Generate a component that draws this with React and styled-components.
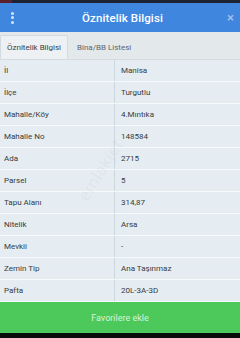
import React from "react";
import styled, { createGlobalStyle } from "styled-components";

const rows = [
  ["İl", "Manisa"],
  ["İlçe", "Turgutlu"],
  ["Mahalle/Köy", "4.Mıntıka"],
  ["Mahalle No", "148584"],
  ["Ada", "2715"],
  ["Parsel", "5"],
  ["Tapu Alanı", "314,87"],
  ["Nitelik", "Arsa"],
  ["Mevkii", "-"],
  ["Zemin Tip", "Ana Taşınmaz"],
  ["Pafta", "20L-3A-3D"],
];

export default function App() {
  return (
    <>
      <GlobalStyle />
      <Screen>
        <StatusStrip />
        <Header>
          <MenuDots>
            <span />
            <span />
            <span />
          </MenuDots>
          <Title>Öznitelik Bilgisi</Title>
          <Close>×</Close>
        </Header>
        <TabBar>
          <Tab active>Öznitelik Bilgisi</Tab>
          <Tab>Bina/BB Listesi</Tab>
        </TabBar>
        <Table>
          {rows.map(([label, value]) => (
            <Row key={label}>
              <Label>{label}</Label>
              <Value>{value}</Value>
            </Row>
          ))}
          <Watermark>emlakjet</Watermark>
        </Table>
        <FavButton>Favorilere ekle</FavButton>
        <BottomStrip />
      </Screen>
    </>
  );
}

const GlobalStyle = createGlobalStyle`
  html, body {
    margin: 0;
    padding: 0;
    background: #000;
  }
  * {
    box-sizing: border-box;
  }
`;

const Screen = styled.div`
  width: 240px;
  height: 338px;
  display: flex;
  flex-direction: column;
  overflow: hidden;
  font-family: Roboto, "Liberation Sans", sans-serif;
  background: #e6edf2;
`;

const StatusStrip = styled.div`
  height: 3px;
  background: linear-gradient(90deg, #5a1f2a 0 12px, #1d2333 12px);
`;

const Header = styled.div`
  height: 29px;
  background: #3f86df;
  display: flex;
  align-items: center;
  justify-content: space-between;
  padding: 0 6px 0 11px;
`;

const MenuDots = styled.div`
  width: 20px;
  display: flex;
  flex-direction: column;
  gap: 1.5px;

  span {
    width: 3px;
    height: 3px;
    border-radius: 50%;
    background: #d6e6fb;
  }
`;

const Title = styled.div`
  color: #ffffff;
  font-size: 11.5px;
  font-weight: 500;
  letter-spacing: 0.1px;
`;

const Close = styled.div`
  width: 20px;
  text-align: right;
  color: #9fbde8;
  font-size: 13px;
  font-weight: 700;
  line-height: 1;
`;

const TabBar = styled.div`
  height: 28px;
  background: #e3e8eb;
  display: flex;
  align-items: flex-end;
  border-bottom: 1px solid #d6dde2;
`;

const Tab = styled.div`
  height: 24px;
  display: flex;
  align-items: center;
  padding: 0 6px;
  margin-right: ${(p) => (p.active ? "2px" : "0")};
  font-size: 8px;
  color: ${(p) => (p.active ? "#3a3f44" : "#5d6670")};
  background: ${(p) => (p.active ? "#edf1f3" : "transparent")};
  border: ${(p) => (p.active ? "1px solid #d4dbe0" : "1px solid transparent")};
  border-bottom: none;
  border-radius: 2px 2px 0 0;
`;

const Table = styled.div`
  position: relative;
  display: flex;
  flex-direction: column;
`;

const Row = styled.div`
  height: 22px;
  display: grid;
  grid-template-columns: 115px 1fr;
  background: #e5edf2;
  border-bottom: 1px solid #f6f9fa;
`;

const Label = styled.div`
  display: flex;
  align-items: center;
  padding-left: 4px;
  font-size: 8px;
  color: #363b41;
  border-right: 1px solid #cdd7de;
`;

const Value = styled.div`
  display: flex;
  align-items: center;
  padding-left: 6px;
  font-size: 8px;
  color: #363b41;
`;

const Watermark = styled.div`
  position: absolute;
  left: 66px;
  top: 100px;
  transform: rotate(-58deg);
  font-size: 17px;
  color: rgba(120, 130, 140, 0.08);
  pointer-events: none;
  letter-spacing: 0.5px;
`;

const FavButton = styled.div`
  height: 31px;
  background: #4cc95a;
  display: flex;
  align-items: center;
  justify-content: center;
  color: #d8f3da;
  font-size: 9px;
`;

const BottomStrip = styled.div`
  flex: 1;
  background: #0a0a0a;
`;
